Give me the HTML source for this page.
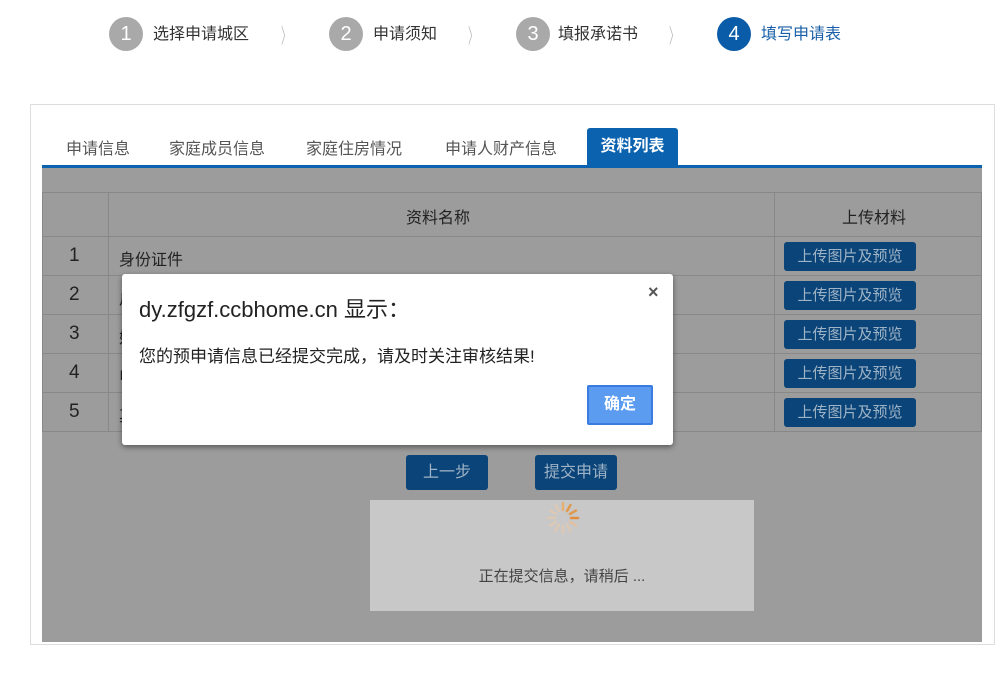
<!DOCTYPE html>
<html><head><meta charset="utf-8"><style>
*{margin:0;padding:0;box-sizing:border-box}
body{width:1004px;height:676px;background:#fff;position:relative;overflow:hidden;font-family:"Liberation Sans","Noto Sans CJK SC",sans-serif;color:#333}
.a{position:absolute}
.c{width:34px;height:34px;border-radius:50%;background:#a9a9a9;color:#fff;font-size:20px;text-align:center;line-height:34px;top:17px}
.sl{top:20px;font-size:16px;color:#333}
.ch{top:20px;font-size:20px;color:#bbb;transform:scaleX(.5)}
.tab{top:135px;font-size:16px;color:#555}
.row{left:42px;width:940px;height:39px;border-bottom:1px solid #888;font-size:16px;color:#222}
.ub{left:784px;width:132px;height:29px;background:#0a4478;color:#9fb3c6;font-size:15px;text-align:center;line-height:29px;border-radius:3px}
</style></head><body>
<div class="a c" style="left:109px">1</div><div class="a sl" style="left:153px">选择申请城区</div><div class="a ch" style="left:276px">〉</div>
<div class="a c" style="left:329px">2</div><div class="a sl" style="left:373px">申请须知</div><div class="a ch" style="left:463px">〉</div>
<div class="a c" style="left:516px">3</div><div class="a sl" style="left:558px">填报承诺书</div><div class="a ch" style="left:664px">〉</div>
<div class="a c" style="left:717px;background:#0a5ca8">4</div><div class="a sl" style="left:761px;color:#1a5fa8">填写申请表</div>

<div class="a" style="left:30px;top:104px;width:965px;height:541px;border:1px solid #ddd"></div>
<div class="a tab" style="left:66px">申请信息</div>
<div class="a tab" style="left:169px">家庭成员信息</div>
<div class="a tab" style="left:306px">家庭住房情况</div>
<div class="a tab" style="left:445px">申请人财产信息</div>
<div class="a" style="left:587px;top:128px;width:91px;height:38px;background:#0b63b0;color:#fff;font-weight:bold;font-size:16px;text-align:center;line-height:38px;border-radius:3px 3px 0 0">资料列表</div>
<div class="a" style="left:42px;top:165px;width:940px;height:3px;background:#0b63b0"></div>

<div class="a" style="left:42px;top:168px;width:940px;height:474px;background:#9c9c9c"></div>
<div class="a" style="left:42px;top:192px;width:940px;height:240px;border:1px solid #888;border-bottom:none"></div>
<div class="a" style="left:108px;top:192px;width:1px;height:240px;background:#888"></div>
<div class="a" style="left:774px;top:192px;width:1px;height:240px;background:#888"></div>
<div class="a row" style="top:198px;height:39px;border-bottom:1px solid #888"><span class="a" style="left:364px;top:6px">资料名称</span><span class="a" style="left:800px;top:6px">上传材料</span></div>
<div class="a row" style="top:237px"><span class="a" style="left:27px;top:8px;font-size:19px">1</span><span class="a" style="left:77px;top:9px">身份证件</span></div>
<div class="a row" style="top:276px"><span class="a" style="left:27px;top:8px;font-size:19px">2</span><span class="a" style="left:77px;top:9px">户口本</span></div>
<div class="a row" style="top:315px"><span class="a" style="left:27px;top:8px;font-size:19px">3</span><span class="a" style="left:77px;top:9px">婚姻证明</span></div>
<div class="a row" style="top:354px"><span class="a" style="left:27px;top:8px;font-size:19px">4</span><span class="a" style="left:77px;top:9px">申请书</span></div>
<div class="a row" style="top:393px"><span class="a" style="left:27px;top:8px;font-size:19px">5</span><span class="a" style="left:77px;top:9px">其他</span></div>
<div class="a ub" style="top:242px">上传图片及预览</div>
<div class="a ub" style="top:281px">上传图片及预览</div>
<div class="a ub" style="top:320px">上传图片及预览</div>
<div class="a ub" style="top:359px">上传图片及预览</div>
<div class="a ub" style="top:398px">上传图片及预览</div>

<div class="a" style="left:406px;top:455px;width:82px;height:35px;background:#0a4478;color:#9fb3c6;font-size:16px;text-align:center;line-height:35px;border-radius:3px">上一步</div>
<div class="a" style="left:535px;top:455px;width:82px;height:35px;background:#0a4478;color:#9fb3c6;font-size:16px;text-align:center;line-height:35px;border-radius:3px">提交申请</div>
<div class="a" style="left:370px;top:500px;width:384px;height:111px;background:#c8c8c8"></div>
<svg class="a" style="left:545px;top:500px" width="36" height="36" viewBox="-18 -18 36 36">
<g stroke-linecap="round" stroke-width="2.5">
<line x1="0" y1="-8" x2="0" y2="-15" stroke="#e8b070" transform="rotate(0)"/>
<line x1="0" y1="-8" x2="0" y2="-15" stroke="#e09a50" transform="rotate(30)"/>
<line x1="0" y1="-8" x2="0" y2="-15" stroke="#e09a50" transform="rotate(60)"/>
<line x1="0" y1="-8" x2="0" y2="-15" stroke="#e08d40" transform="rotate(90)"/>
<line x1="0" y1="-8" x2="0" y2="-15" stroke="#e0c0a0" transform="rotate(120)"/>
<line x1="0" y1="-8" x2="0" y2="-15" stroke="#dcc8b4" transform="rotate(150)"/>
<line x1="0" y1="-8" x2="0" y2="-15" stroke="#dcc8b4" transform="rotate(180)"/>
<line x1="0" y1="-8" x2="0" y2="-15" stroke="#dcc8b4" transform="rotate(210)"/>
<line x1="0" y1="-8" x2="0" y2="-15" stroke="#dcc8b4" transform="rotate(240)"/>
<line x1="0" y1="-8" x2="0" y2="-15" stroke="#dcc8b4" transform="rotate(270)"/>
<line x1="0" y1="-8" x2="0" y2="-15" stroke="#dcc8b4" transform="rotate(300)"/>
<line x1="0" y1="-8" x2="0" y2="-15" stroke="#dcc8b4" transform="rotate(330)"/>
</g></svg>
<div class="a" style="left:370px;top:565px;width:384px;text-align:center;font-size:15px;color:#444">正在提交信息，请稍后 ...</div>

<div class="a" style="left:122px;top:274px;width:551px;height:171px;background:#fff;border-radius:3px;box-shadow:0 2px 6px rgba(0,0,0,.45)">
<div class="a" style="left:17px;top:18px;font-size:22px;color:#222">dy.zfgzf.ccbhome.cn 显示：</div>
<div class="a" style="left:526px;top:8px;font-size:18px;color:#555;font-weight:bold">×</div>
<div class="a" style="left:17px;top:68px;font-size:17px;color:#222">您的预申请信息已经提交完成，请及时关注审核结果!</div>
<div class="a" style="left:465px;top:111px;width:66px;height:40px;background:#5b9bf0;border:2px solid #3a7be0;color:#fff;font-weight:bold;font-size:16px;text-align:center;line-height:36px;border-radius:2px">确定</div>
</div>
</body></html>
